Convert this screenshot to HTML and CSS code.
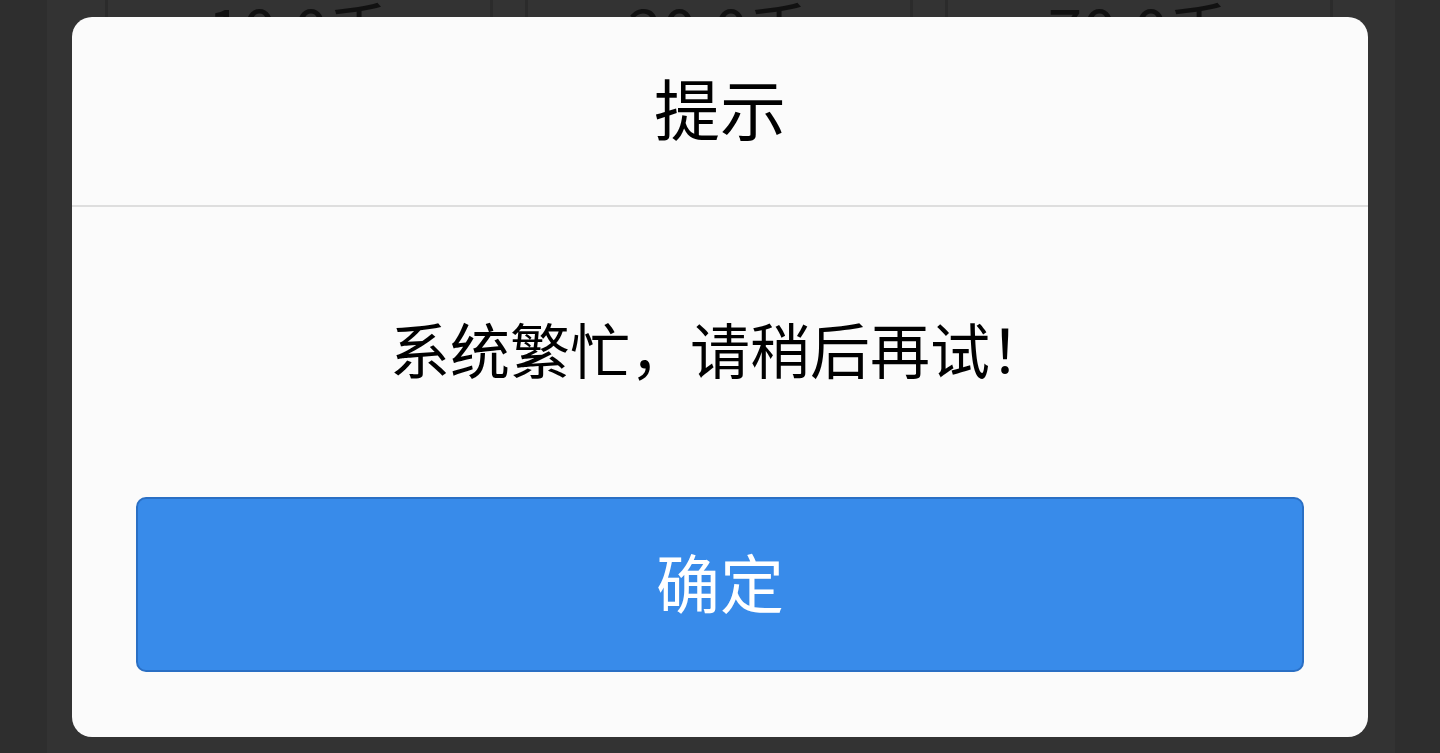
FILE: index.html
```html
<!DOCTYPE html>
<html lang="zh-CN">
<head>
<meta charset="utf-8">
<title>提示</title>
<link rel="stylesheet" href="styles.css">
</head>
<body>
<div class="page">
  <div class="grid">
    <div class="cell">10.0千</div>
    <div class="cell">20.0千</div>
    <div class="cell">70.0千</div>
  </div>
</div>
<div class="modal">
  <div class="modal-header">提示</div>
  <div class="modal-body">系统繁忙，请稍后再试！</div>
  <div class="modal-footer">
    <button class="btn">确定</button>
  </div>
</div>
</body>
</html>
```
FILE: styles.css
```css
html, body {
  margin: 0;
  padding: 0;
  height: 100%;
  overflow: hidden;
}
body {
  background: #2e2e2e;
  font-family: "Noto Sans CJK SC", "Noto Sans", sans-serif;
}
.page {
  margin: 0 45px 0 47px;
  height: 753px;
  background: #333333;
  display: flow-root;
  overflow: hidden;
}
.grid {
  display: flex;
  gap: 32px;
  padding: 0 62px 0 58px;
  margin-top: -40px;
}
.cell {
  flex: 1;
  height: 120px;
  border: 3px solid #2b2b2b;
  border-top: none;
  box-sizing: border-box;
  display: flex;
  align-items: flex-end;
  justify-content: center;
  padding-bottom: 18px;
  font-size: 62px;
  line-height: 1;
  color: #111111;
}
.modal {
  position: fixed;
  left: 72px;
  top: 17px;
  width: 1296px;
  height: 720px;
  background: #fbfbfb;
  border-radius: 20px;
  display: flex;
  flex-direction: column;
  overflow: hidden;
}
.modal-header {
  height: 190px;
  border-bottom: 2px solid #dedede;
  display: flex;
  align-items: center;
  justify-content: center;
  padding-bottom: 10px;
  box-sizing: border-box;
  font-size: 66px;
  color: #000;
}
.modal-body {
  height: 290px;
  display: flex;
  align-items: center;
  justify-content: center;
  padding-bottom: 10px;
  box-sizing: border-box;
  font-size: 60px;
  color: #000;
}
.modal-footer {
  padding: 0 64px;
}
.btn {
  width: 100%;
  height: 175px;
  background: #388bea;
  border: 2px solid #2a6fc4;
  border-radius: 10px;
  color: #ffffff;
  font-family: "Noto Sans CJK SC", "Noto Sans", sans-serif;
  font-size: 64px;
  display: flex;
  align-items: center;
  justify-content: center;
  padding: 0 0 10px 0;
}
```
